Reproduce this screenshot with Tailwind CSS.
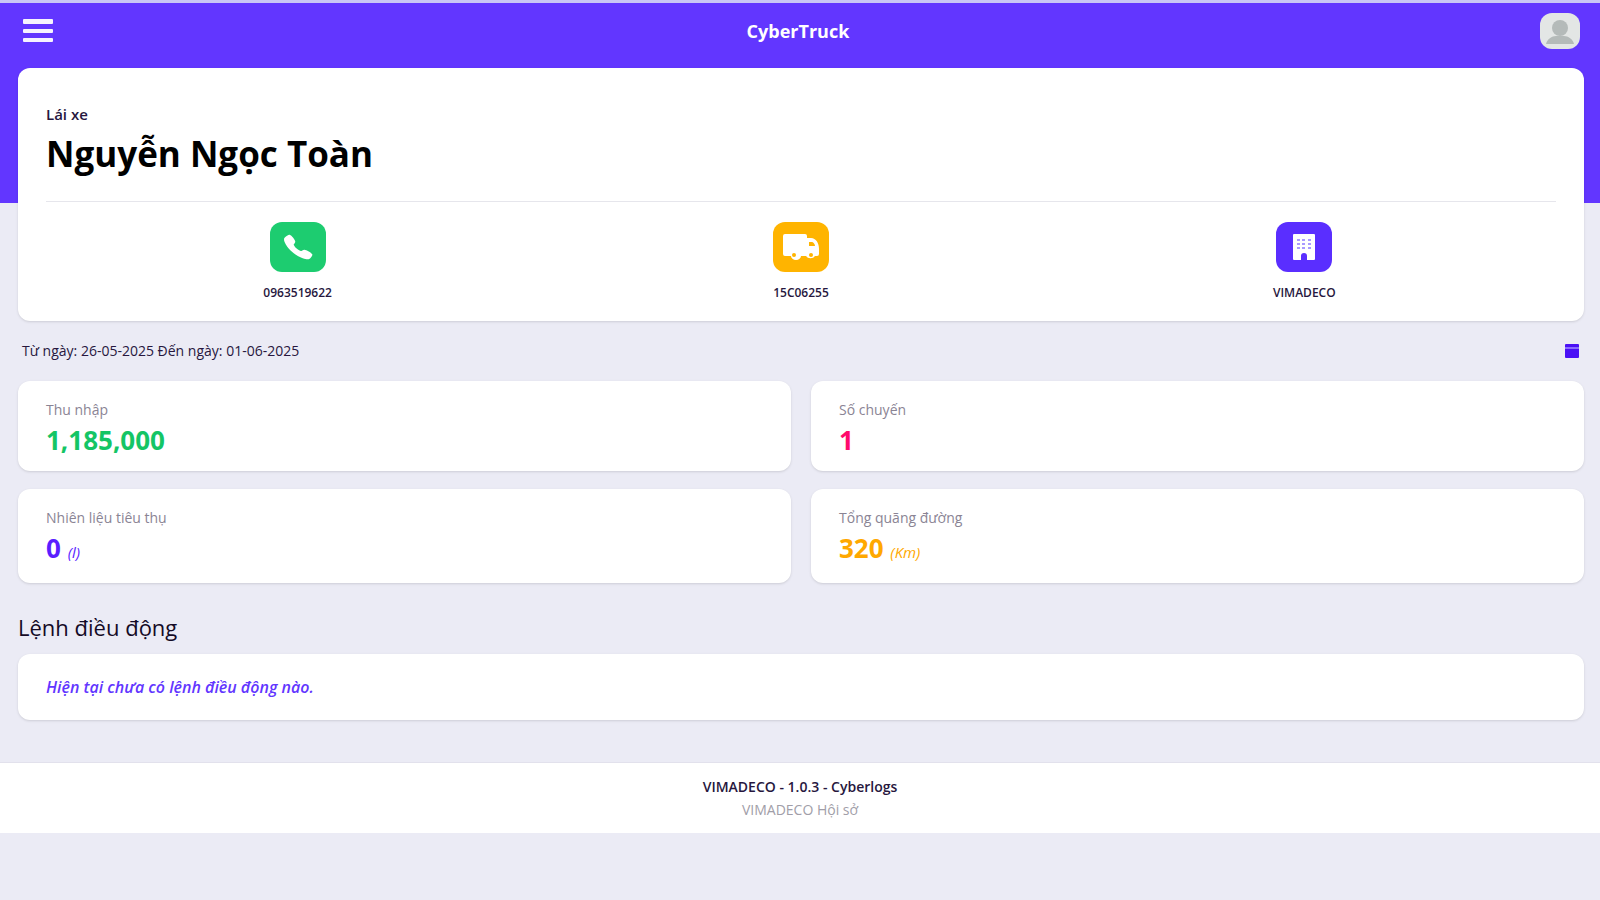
<!DOCTYPE html>
<html lang="vi">
<head>
  <meta charset="UTF-8" />
  <meta name="viewport" content="width=device-width, initial-scale=1.0"/>
  <title>CyberTruck</title>
  <script src="https://cdn.jsdelivr.net/npm/@tailwindcss/browser@4"></script>
</head>
<body class="bg-[#ebebf5] min-h-screen font-['Open_Sans','Noto_Sans',sans-serif] text-[#27173e]">

  <!-- Header -->
  <header class="bg-[#6236ff] border-t-3 border-[#c9c6f5] pb-34">
    <div class="flex items-center justify-between h-16 px-5 pb-2">
      <button type="button" aria-label="Menu" class="w-9 flex justify-center">
        <svg class="w-8 h-6" viewBox="0 0 32 24" fill="#f6f3ff">
          <rect x="1" y="0" width="30" height="5" rx="1"/>
          <rect x="1" y="10" width="30" height="4" rx="1"/>
          <rect x="1" y="19" width="30" height="4" rx="1"/>
        </svg>
      </button>
      <h1 class="text-lg font-bold text-white">CyberTruck</h1>
      <a href="#" aria-label="Profile" class="block w-10 h-9 rounded-xl overflow-hidden bg-[#e3e6e5]">
        <svg class="w-10 h-9" viewBox="0 0 40 36" fill="#b4bab9">
          <ellipse cx="20" cy="15" rx="8" ry="8"/>
          <path d="M6 31c1-5 6-8 10-8h8c4 0 9 3 10 8z"/>
        </svg>
      </a>
    </div>
  </header>

  <main class="pl-[18px] pr-4">
    <!-- Driver card -->
    <section class="bg-white rounded-xl shadow-sm px-7 pt-9 pb-5 -mt-[135px]">
      <p class="text-[15px] leading-5 font-semibold">Lái xe</p>
      <h2 class="text-[35px] leading-10 font-bold text-black mt-[10px]">Nguyễn Ngọc Toàn</h2>
      <div class="grid grid-cols-3 border-t border-[#e6e6ec] mt-[27px] pt-5">
        <a href="#" class="flex flex-col items-center gap-[13px]">
          <span class="w-14 h-[50px] rounded-xl bg-[#1dcc70] flex items-center justify-center">
            <svg class="w-8 h-7" viewBox="0 0 512 512" preserveAspectRatio="none" fill="#fff"><path d="M391 480c-19.500 0-46.900-7.100-88-30-50-28-88.700-53.800-138.200-103.200C117 299 93.800 268.200 61.300 209 24.600 142.200 30.800 107.200 37.800 92.300c8.300-17.800 20.500-28.400 36.400-39a176 176 0 0 1 28.600-15.200l2.800-1.200c5-2.300 12.700-5.700 22.400-2 6.400 2.400 12.200 7.300 21.200 16.200 18.500 18.200 43.700 58.800 53 78.700 6.300 13.400 10.400 22.300 10.400 32.200 0 11.600-5.800 20.600-12.900 30.300-1.300 1.800-2.600 3.500-3.900 5.200-7.700 10.100-9.400 13-8.300 18.300 2.300 10.500 19.100 41.700 46.800 69.300s57.900 43.500 68.500 45.700c5.400 1.200 8.400-.6 18.900-8.600l4.700-3.600c10.800-8 19.300-13.700 30.700-13.700h.1c9.900 0 18.300 4.300 32.400 11.400 18.300 9.200 60.100 34.200 78.400 52.700 8.900 9 13.900 14.800 16.300 21.200 3.600 9.700.2 17.500-2 22.500l-1.200 2.800a178 178 0 0 1-15.300 28.500c-10.600 15.800-21.200 28-39.100 36.400A84 84 0 0 1 391 480z"/></svg>
          </span>
          <span class="text-xs leading-4 font-semibold">0963519622</span>
        </a>
        <a href="#" class="flex flex-col items-center gap-[13px]">
          <span class="w-14 h-[50px] rounded-xl bg-[#ffb400] flex items-center justify-center">
            <svg class="w-10 h-7" viewBox="0 0 40 28">
              <path fill="#fff" d="M4 1h20a2 2 0 0 1 2 2v2h4c5 0 8 5 8 11v5a2 2 0 0 1-2 2h-2a5 4 0 0 1-9 0h-5a5 4 0 0 1-10 0H4a2 2 0 0 1-2-2V3a2 2 0 0 1 2-2z"/>
              <path fill="#ffb400" d="M28 9h3c1 0 3 2 3 4h-6z"/>
              <circle cx="13" cy="22" r="2" fill="#ffb400"/>
              <circle cx="30" cy="22" r="2" fill="#ffb400"/>
            </svg>
          </span>
          <span class="text-xs leading-4 font-semibold">15C06255</span>
        </a>
        <a href="#" class="flex flex-col items-center gap-[13px]">
          <span class="w-14 h-[50px] rounded-xl bg-[#5a2eff] flex items-center justify-center">
            <svg class="w-6 h-7" viewBox="0 0 24 28">
              <path fill="#fff" d="M2 1h20a1 1 0 0 1 1 1v24a1 1 0 0 1-1 1h-7v-4a3 3 0 0 0-6 0v4H2a1 1 0 0 1-1-1V2a1 1 0 0 1 1-1z"/>
              <path fill="#a99bff" d="M5 6h3v2H5zM10 6h3v2h-3zM16 6h3v2h-3zM5 10h3v2H5zM10 10h3v2h-3zM16 10h3v2h-3zM5 14h3v2H5zM10 14h3v2h-3zM16 14h3v2h-3z"/>
            </svg>
          </span>
          <span class="text-xs leading-4 font-semibold">VIMADECO</span>
        </a>
      </div>
    </section>

    <!-- Date range -->
    <div class="flex items-center justify-between px-1 h-[60px]">
      <p class="text-sm">Từ ngày: 26-05-2025 Đến ngày: 01-06-2025</p>
      <button type="button" aria-label="Chọn ngày">
        <svg class="w-4 h-4" viewBox="0 0 16 16"><rect x="1" y="1" width="14" height="14" rx="1" fill="#4a10f5"/><path d="M1 5h14" stroke="#8a6cff" stroke-width="2"/></svg>
      </button>
    </div>

    <!-- Stats -->
    <div class="grid grid-cols-2 gap-x-5 gap-y-[18px]">
      <div class="bg-white rounded-xl shadow-sm px-7 pt-[19px] pb-[11px]">
        <p class="text-sm leading-5 text-[#8a8494]">Thu nhập</p>
        <p class="text-[26px] leading-10 font-bold text-[#14c565]">1,185,000</p>
      </div>
      <div class="bg-white rounded-xl shadow-sm px-7 pt-[19px] pb-[11px]">
        <p class="text-sm leading-5 text-[#8a8494]">Số chuyến</p>
        <p class="text-[26px] leading-10 font-bold text-[#ff0a6c]">1</p>
      </div>
      <div class="bg-white rounded-xl shadow-sm px-7 pt-[19px] pb-[15px]">
        <p class="text-sm leading-5 text-[#8a8494]">Nhiên liệu tiêu thụ</p>
        <p class="text-[26px] leading-10 font-bold text-[#5a1eff]">0 <i class="text-[15px] leading-5 font-normal">(l)</i></p>
      </div>
      <div class="bg-white rounded-xl shadow-sm px-7 pt-[19px] pb-[15px]">
        <p class="text-sm leading-5 text-[#8a8494]">Tổng quãng đường</p>
        <p class="text-[26px] leading-10 font-bold text-[#ffa800]">320 <i class="text-[15px] leading-5 font-normal">(Km)</i></p>
      </div>
    </div>

    <!-- Orders -->
    <h2 class="text-[22px] leading-8 font-medium text-[#140a26] mt-7">Lệnh điều động</h2>
    <div class="bg-white rounded-xl shadow-sm px-7 py-5 mt-[11px]">
      <p class="text-base leading-[26px] italic font-semibold text-[#6236ff]">Hiện tại chưa có lệnh điều động nào.</p>
    </div>
  </main>

  <!-- Footer -->
  <footer class="bg-white border-t border-[#e2e1ec] mt-[42px] py-3 text-center">
    <p class="text-sm leading-6 font-semibold">VIMADECO - 1.0.3 - Cyberlogs</p>
    <p class="text-sm leading-[22px] text-[#a19ea8]">VIMADECO Hội sở</p>
  </footer>

</body>
</html>
